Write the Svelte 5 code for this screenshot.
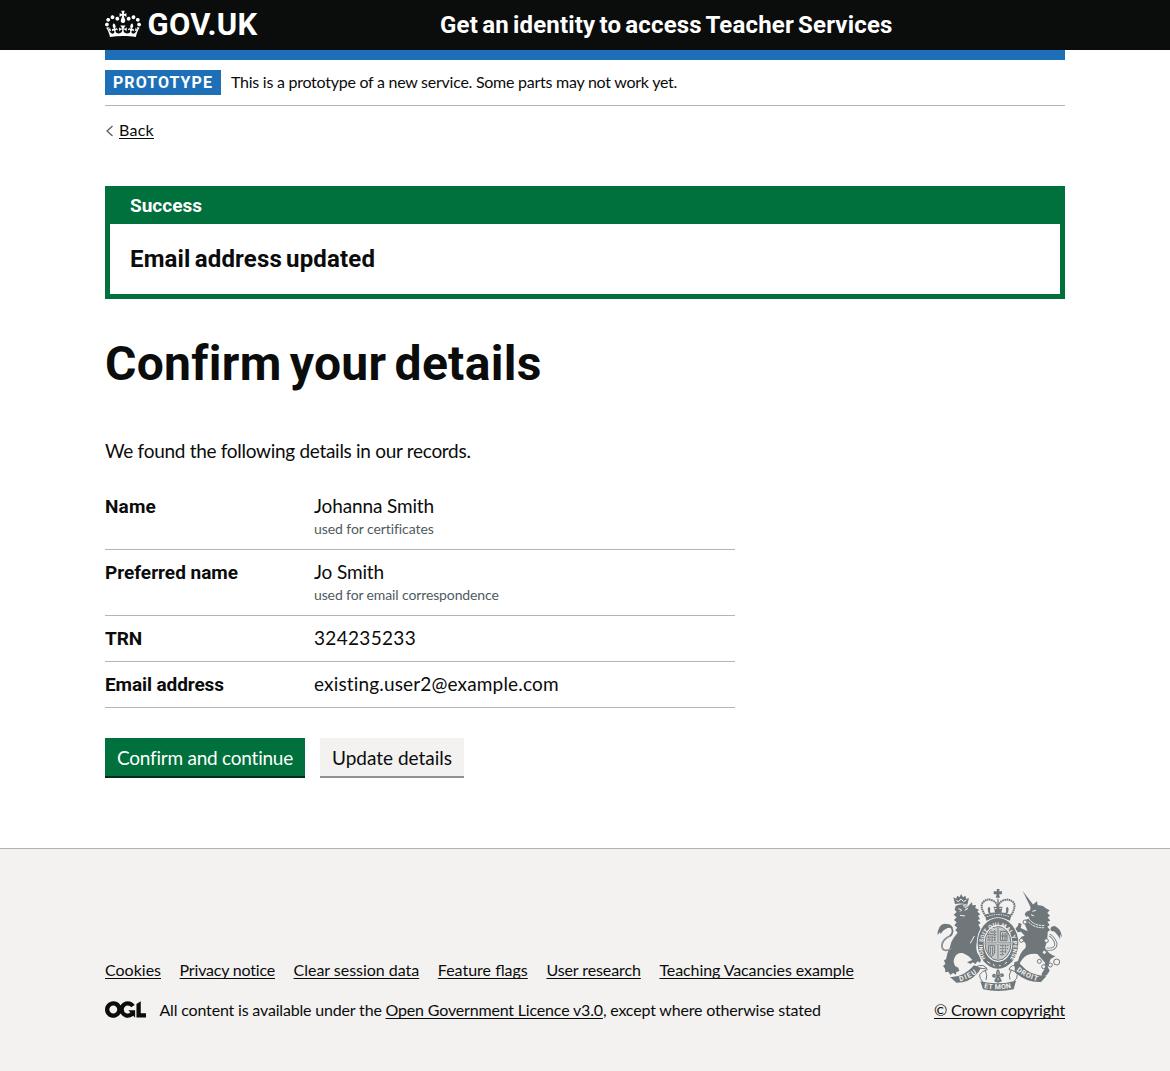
<script>
  const rows = [
    { key: 'Name', value: 'Johanna Smith', hint: 'used for certificates', k: 'k-name', v: 'v-name', h: 'h-name' },
    { key: 'Preferred name', value: 'Jo Smith', hint: 'used for email correspondence', k: 'k-pref', v: 'v-pref', h: 'h-pref' },
    { key: 'TRN', value: '324235233', k: 'k-trn', v: 'v-trn' },
    { key: 'Email address', value: 'existing.user2@example.com', k: 'k-email', v: 'v-email' }
  ];
  const links = ['Cookies', 'Privacy notice', 'Clear session data', 'Feature flags', 'User research', 'Teaching Vacancies example'];
</script>

<header class="header">
  <div class="container header-inner">
    <a class="logo" href="#top">
      <svg class="crown" viewBox="0 0 132 97" width="36" height="30" aria-hidden="true">
        <path fill="currentColor" fill-rule="evenodd" d="M25 30.2c3.5 1.5 7.7-.2 9.1-3.7 1.5-3.6-.2-7.8-3.9-9.2-3.6-1.4-7.6.3-9.1 3.9-1.4 3.5.3 7.5 3.9 9zM9 39.5c3.6 1.5 7.8-.2 9.2-3.7 1.5-3.6-.2-7.8-3.9-9.1-3.6-1.5-7.6.2-9.1 3.8-1.4 3.5.3 7.5 3.8 9zM4.4 57.2c3.5 1.5 7.7-.2 9.1-3.8 1.5-3.6-.2-7.7-3.9-9.1-3.5-1.5-7.6.3-9.1 3.8-1.4 3.5.3 7.6 3.9 9.1zm38.3-21.4c3.5 1.5 7.7-.2 9.1-3.8 1.5-3.6-.2-7.7-3.9-9.1-3.6-1.5-7.6.3-9.1 3.8-1.3 3.6.4 7.7 3.9 9.1zm64.4-5.6c-3.6 1.5-7.8-.2-9.1-3.7-1.5-3.6.2-7.8 3.8-9.2 3.6-1.4 7.7.3 9.2 3.9 1.3 3.5-.4 7.5-3.9 9zm15.9 9.3c-3.6 1.5-7.7-.2-9.1-3.7-1.5-3.6.2-7.8 3.7-9.1 3.6-1.5 7.7.2 9.2 3.8 1.5 3.5-.3 7.5-3.8 9zm4.7 17.7c-3.6 1.5-7.8-.2-9.2-3.8-1.5-3.6.2-7.7 3.9-9.1 3.6-1.5 7.7.3 9.2 3.8 1.3 3.5-.4 7.6-3.9 9.1zM89.3 35.8c-3.6 1.5-7.8-.2-9.2-3.8-1.4-3.6.2-7.7 3.9-9.1 3.6-1.5 7.7.3 9.2 3.8 1.4 3.6-.3 7.7-3.9 9.1zM69.7 17.7l8.9 4.7V9.3l-8.9 2.8c-.2-.3-.5-.6-.9-.9L72.4 0H59.6l3.5 11.2c-.3.3-.6.5-.9.9l-8.8-2.8v13.1l8.8-4.7c.3.3.6.7.9.9l-5 15.4v.1c-.2.8-.4 1.6-.4 2.4 0 4.1 3.1 7.5 7 8.1h.2c.3 0 .7.1 1 .1.4 0 .7 0 1-.1h.2c4-.6 7.1-4.1 7.1-8.1 0-.8-.1-1.7-.4-2.4V34l-5.1-15.4c.4-.2.7-.6 1-.9zM66 92.8c16.9 0 32.8 1.1 47.1 3.2 4-16.9 8.9-26.7 14-33.5l-9.6-3.4c1 4.9 1.1 7.2 0 10.2-1.5-1.4-3-4.3-4.2-8.7L108.6 76c2.8-2 5-3.2 7.5-3.3-4.4 9.4-10 11.9-13.6 11.2-4.3-.8-6.3-4.6-5.6-7.9 1-4.7 5.7-5.9 8-.5 4.3-8.7-3-11.4-7.6-8.8 7.1-7.2 7.9-13.5 2.1-21.1-8 6.1-8.1 12.3-4.5 20.8-4.7-5.4-12.1-2.5-9.5 6.2 3.4-5.2 7.9-2 7.2 3.1-.6 4.3-6.4 7.8-13.5 7.2-10.3-.9-10.9-8-11.2-13.8 2.5-.5 7.1 1.8 11 7.3L80.2 60c-4.1 4.4-8 5.3-12.3 5.4 1.4-4.4 8-11.6 8-11.6H55.5s6.4 7.2 7.9 11.6c-4.2-.1-8-1-12.3-5.4l1.4 16.4c3.9-5.5 8.5-7.7 10.9-7.3-.3 5.8-.9 12.8-11.1 13.8-7.2.6-12.9-2.9-13.5-7.2-.7-5 3.8-8.3 7.1-3.1 2.7-8.7-4.6-11.6-9.4-6.2 3.7-8.5 3.6-14.7-4.6-20.8-5.8 7.6-5 13.9 2.2 21.1-4.7-2.6-11.9.1-7.7 8.8 2.3-5.5 7.1-4.2 8.1.5.7 3.3-1.3 7.1-5.7 7.9-3.5.7-9-1.8-13.5-11.2 2.5.1 4.7 1.3 7.5 3.3l-4.7-15.4c-1.2 4.4-2.7 7.2-4.3 8.7-1.1-3-.9-5.3 0-10.2l-9.5 3.4c5 6.9 9.9 16.7 14 33.5 14.8-2.1 30.8-3.2 47.7-3.2z" />
      </svg>
      <span class="wordmark">GOV.UK</span>
    </a>
    <a class="service" href="#top">Get an identity to access Teacher Services</a>
  </div>
</header>

<div class="container">
  <div class="blue-bar"></div>
  <div class="phase">
    <strong class="tag">PROTOTYPE</strong>
    <span class="phase-text">This is a prototype of a new service. Some parts may not work yet.</span>
  </div>

  <a class="back" href="#back">
    <svg viewBox="0 0 8 12" width="8" height="12" aria-hidden="true"><path d="M7.5 1 2 6 7.5 11" fill="none" stroke="#505a5f" stroke-width="1.2" /></svg>
    <span>Back</span>
  </a>

  <main>
    <section class="notice">
      <h2>Success</h2>
      <p>Email address updated</p>
    </section>

    <h1>Confirm your details</h1>
    <p class="lead">We found the following details in our records.</p>

    <dl>
      {#each rows as row}
        <div class="row">
          <dt class={row.k}>{row.key}</dt>
          <dd>
            <span class="value {row.v}">{row.value}</span>
            {#if row.hint}<span class="hint {row.h}">{row.hint}</span>{/if}
          </dd>
        </div>
      {/each}
    </dl>

    <div class="buttons">
      <button class="primary">Confirm and continue</button>
      <button class="secondary">Update details</button>
    </div>
  </main>
</div>

<footer>
  <div class="container footer-inner">
    <div class="meta">
      <ul>
        {#each links as link, i}
          <li><a class="link-{i}" href="#link">{link}</a></li>
        {/each}
      </ul>
      <div class="licence">
        <svg viewBox="0 0 483.2 195.7" width="41" height="17" aria-hidden="true">
          <path fill="currentColor" d="M421.5 142.8V.1l-50.7 32.3v161.1h112.4v-50.7zm-122.3-9.6A47.12 47.12 0 0 1 221 97.8c0-26 21.1-47.1 47.1-47.1 16.7 0 31.4 8.7 39.7 21.8l42.7-27.2A97.63 97.63 0 0 0 268.1 0c-36.5 0-68.3 20.1-85.1 49.7A98 98 0 0 0 97.8 0C43.9 0 0 43.9 0 97.8s43.9 97.8 97.8 97.8c36.5 0 68.3-20.1 85.1-49.7a97.76 97.76 0 0 0 149.6 25.4l19.4 22.2h3v-87.8h-80l24.3 27.5zM97.8 145c-26 0-47.1-21.1-47.1-47.1s21.1-47.1 47.1-47.1 47.1 21.1 47.1 47.1S123.8 145 97.8 145" />
        </svg>
        <span>All content is available under the <a href="#ogl">Open Government Licence v3.0</a>, except where otherwise stated</span>
      </div>
    </div>

    <div class="copyright">
      <svg class="arms" viewBox="36 27 375 306" width="125" height="102" aria-hidden="true">
        <defs>
          <path id="garter" d="M182 235A46 60 0 1 1 256 235" />
          <path id="dieu" d="M105 304Q137 296 161 274" />
          <path id="motto" d="M177 324Q219 332 262 323" />
          <path id="droit" d="M274 272Q300 294 342 304" />
        </defs>

        <!-- imperial crown -->
        <g fill="none" stroke="#6f777b" stroke-width="4">
          <path d="M182 108Q163 80 174 67Q187 53 206 63Q217 70 218 84Q220 70 231 63Q250 53 265 67Q275 80 257 108" stroke-width="6" stroke-dasharray="5 1.5" />
          <path d="M219 56V100M206 82H232M192 82Q192 98 198 104M247 82Q247 98 241 104" />
        </g>
        <path fill="#6f777b" d="M215 27h9l-2 7h9v9h-9l3 10h-13l3-10h-9v-9h10zM180 104Q219 90 259 104L255 122Q219 108 184 122z" />
        <path d="M186 110Q219 97 253 110" fill="none" stroke="#f3f2f1" stroke-width="3" stroke-dasharray="4 3" />
        <path fill="#6f777b" d="m207 84 6 4 6-9 6 9 7-4-3 14h-19zM188 86l4-5 4 5-2 12h-4zM243 86l4-5 4 5-2 12h-4z" />

        <!-- lion -->
        <path fill="#6f777b" d="m90 72-5-20 8 4 4-9 7 5 4-10 6 10 7-5 3 10 8-3-5 20q-19-6-37-2z" />
        <path fill="#6f777b" d="M92 78Q111 68 130 78L141 66L142 76L153 75L151 84L162 89L157 95L166 103L159 107L165 117L158 121L167 129L160 134L168 148L160 162L163 176L158 184Q150 200 157 219Q163 226 168 240L165 248L158 244L151 252L143 247L137 252L126 247L142 240Q132 227 113 219Q94 217 88 235Q83 246 91 259L100 263L103 273L94 276L93 284L84 279L76 285L70 275L61 277L60 266L54 258L61 252L57 241L63 238Q66 218 74 204Q78 184 87 172L98 158L91 150L97 143L88 136L95 127L87 120L95 112L86 104L95 96L89 89z" />
        <path d="M80 206Q50 220 51 194Q54 177 75 168Q88 157 79 143Q73 136 59 145" fill="none" stroke="#6f777b" stroke-width="5" />
        <path d="M80 206Q50 220 51 194Q54 177 75 168" fill="none" stroke="#f3f2f1" stroke-width="1" />
        <path fill="#6f777b" d="M66 132Q51 129 44 140Q38 151 37 165L45 157L47 162Q54 151 65 145Q79 139 85 147Q80 132 66 132z" />
        <path d="m94 61 6 4 8-8 8 8 8-5M100 86l10 4-5 5M118 81l10 5-9 5M105 106l15 2M114 77l16 2M148 168l-12 22" fill="none" stroke="#f3f2f1" stroke-width="3" />

        <!-- unicorn -->
        <g fill="#6f777b">
          <path d="m293 33 34 44-9 7z" />
          <path d="M318 79 336 64 338 76Q354 75 361 84L374 91L367 98L375 108L368 112L376 122L367 125L374 135L367 140L375 150L368 156Q369 181 360 203Q368 220 391 229L377 237L368 260L374 272L365 286L351 290L350 281L358 268L360 248L337 222Q306 219 292 238L284 250Q291 257 292 265L278 264L267 258L268 247L279 243Q284 219 301 204Q305 193 298 185L284 183L289 170L299 167L288 155L278 157L271 146L279 137L281 128L290 132L287 144L308 154L299 132L302 119L314 115L309 109L303 110L299 102L304 95L315 91z" />
          <path d="M399 145Q386 132 377 143Q374 154 386 154Q397 161 405 178L406 163L411 174Q409 153 399 145z" />
        </g>
        <path d="M365 207Q392 211 393 191Q386 171 373 165" fill="none" stroke="#6f777b" stroke-width="9" />
        <path d="M365 207Q392 211 393 191Q386 171 373 165" fill="none" stroke="#f3f2f1" stroke-width="4" />
        <path d="M312 117Q329 139 360 136M310 125Q328 145 358 143" fill="none" stroke="#f3f2f1" stroke-width="3" stroke-dasharray="7 2" />
        <path d="M322 94l11-3M318 104l9 4" fill="none" stroke="#f3f2f1" stroke-width="3" />
        <g fill="#f3f2f1" stroke="#6f777b" stroke-width="3">
          <circle cx="300" cy="126" r="6" /><circle cx="289" cy="181" r="6" /><circle cx="364" cy="182" r="6" />
          <circle cx="358" cy="217" r="6" /><circle cx="343" cy="244" r="6" /><circle cx="356" cy="260" r="6" />
          <circle cx="376" cy="255" r="6" /><circle cx="395" cy="246" r="9" />
        </g>

        <!-- garter and shield -->
        <ellipse cx="219" cy="190" rx="64" ry="78" fill="#f3f2f1" />
        <ellipse cx="219" cy="190" rx="61" ry="76" fill="#6f777b" />
        <ellipse cx="219" cy="190" rx="43" ry="56" fill="#f3f2f1" />
        <ellipse cx="219" cy="190" rx="39" ry="51" fill="#c9cbcb" stroke="#6f777b" stroke-width="3" />
        <g stroke="#6f777b" fill="none">
          <path d="M219 142V237M181 190H257" stroke-width="5" />
          <path d="M195 156H214M188 164H214M187 172H214M186 180H214M192 160v24M201 154v32M209 150v34" stroke-width="3" stroke-dasharray="5 2" />
          <path d="M226 154H246V182H226zM233 158v22M240 158v22M227 168h19" stroke-width="3" />
          <path d="M190 197H209V219L200 230L190 216zM196 200v21M203 200v24" stroke-width="3" />
          <path d="M225 197H252M225 206H249M225 215H245M225 224H238M232 196v30M241 195v25" stroke-width="3" stroke-dasharray="5 2" />
        </g>
        <path d="M219 142V237M181 190H257" stroke="#f3f2f1" stroke-width="2" />
        <text class="garter-text"><textPath href="#garter" textLength="244">HONI SOIT QUI MAL Y PENSE</textPath></text>
        <path d="M187 245l9 6M204 252l5 7M222 257h5M239 252l7-6" stroke="#f3f2f1" stroke-width="3" />

        <!-- motto scroll -->
        <g fill="#6f777b">
          <path d="M75 291Q114 294 147 256L168 264Q162 276 153 284Q133 307 94 308z" />
          <path d="M289 256Q315 287 364 289L348 306Q302 308 269 275L269 259z" />
          <path d="M166 304Q219 317 273 302L266 328Q219 338 174 328z" />
        </g>
        <path d="M151 261Q178 248 187 269Q170 273 164 284Q163 296 173 305M164 264Q174 268 184 264M288 259Q256 250 252 269Q271 272 277 283Q278 296 267 304M180 269Q189 287 183 300M259 269Q249 287 255 299" fill="none" stroke="#6f777b" stroke-width="3" />
        <path fill="#6f777b" d="M219 267Q228 276 223 286Q228 276 236 283Q239 292 229 291L225 292L231 304L219 308L207 304L213 292Q199 295 202 284Q209 277 215 286Q210 276 219 267z" />
        <path d="M219 275v9M209 286l6 4M229 286l-6 4M219 294v8" stroke="#f3f2f1" stroke-width="2" />
        <g class="scroll-text">
          <text><textPath href="#dieu" textLength="57">DIEU</textPath></text>
          <text><textPath href="#motto" textLength="82">ET MON</textPath></text>
          <text><textPath href="#droit" textLength="70">DROIT</textPath></text>
        </g>
      </svg>
      <a href="#crown">© Crown copyright</a>
    </div>
  </div>
</footer>

<style>
  :global(body) {
    margin: 0;
    background: #fff;
    color: #0b0c0c;
    font-family: Lato, "Liberation Sans", sans-serif;
    font-size: 19px;
    line-height: 25px;
  }
  a { color: inherit; text-decoration: none; }
  .container { width: 960px; margin: 0 auto; }

  .header { height: 50px; background: #0b0c0c; color: #fff; font-family: Roboto, sans-serif; font-weight: 700; }
  .header-inner { display: flex; height: 50px; align-items: center; }
  .logo { display: flex; align-items: center; width: 335px; }
  .crown { display: block; margin-right: 6.5px; margin-top: -2px; }
  .wordmark { font-size: 31px; line-height: 30px; letter-spacing: 0.3px; }
  .service { font-size: 24px; line-height: 30px; letter-spacing: 0.18px; word-spacing: -2px; }

  .blue-bar { height: 10px; background: #1d70b8; }
  .phase { display: flex; align-items: center; padding: 10px 0; border-bottom: 1px solid #b1b4b6; }
  .tag { padding: 0 8px; background: #1d70b8; color: #fff; font: 700 16px/25px Roboto, sans-serif; letter-spacing: 1.05px; }
  .phase-text { margin-left: 10px; padding-bottom: 2px; font-size: 16px; line-height: 23px; letter-spacing: -0.255px; }

  .back { display: flex; align-items: center; gap: 6px; width: max-content; margin-top: 15px; font-size: 16px; line-height: 20px; }
  .back span { line-height: 18px; padding-bottom: 2px; letter-spacing: 0.266px; text-decoration: underline; text-underline-offset: 2px; text-decoration-thickness: 1px; text-decoration-skip-ink: none; }

  .notice { margin-top: 45px; border: 5px solid #00703c; background: #00703c; font-family: Roboto, sans-serif; font-weight: 700; }
  .notice h2 { margin: 0; padding: 2px 20px 6px; color: #fff; font-size: 19px; line-height: 25px; }
  .notice p { margin: 0; padding: 20px; background: #fff; font-size: 24px; line-height: 30px; letter-spacing: 0.16px; word-spacing: -2px; }

  h1 { margin: 40px 0 49px; font: 700 48px/50px Roboto, sans-serif; letter-spacing: 0.3px; word-spacing: -4px; }
  .lead { margin: 0; letter-spacing: -0.293px; }

  dl { width: 630px; margin: 21px 0 30px; }
  .row { display: grid; grid-template-columns: 209px 1fr; padding: 10px 0; border-bottom: 1px solid #b1b4b6; }
  dt { font-family: Roboto, sans-serif; font-weight: 700; }
  dd { margin: 0; }
  .value, .hint { display: block; }
  .value { line-height: 23px; padding-bottom: 2px; }
  .hint { color: #505a5f; font-size: 14px; line-height: 20px; }
  .k-name { letter-spacing: 0.177px; }
  .k-trn, .k-email { letter-spacing: -0.1px; }
  .v-name, .v-pref { letter-spacing: -0.13px; }
  .v-trn { letter-spacing: 0.313px; }
  .v-email { letter-spacing: 0.158px; }
  .h-name { letter-spacing: -0.079px; }
  .h-pref { letter-spacing: -0.122px; }

  .buttons { display: flex; gap: 15px; }
  button { height: 38px; padding: 2px 0 0; border: 0; border-radius: 0; font: 400 19px/36px Lato, sans-serif; }
  .primary { width: 200px; background: #00703c; color: #fff; box-shadow: 0 2px 0 #002d18; letter-spacing: -0.232px; }
  .secondary { width: 144px; background: #f3f2f1; color: #0b0c0c; box-shadow: 0 2px 0 #929191; }

  footer { height: 222px; margin-top: 72px; border-top: 1px solid #b1b4b6; background: #f3f2f1; font-size: 16px; line-height: 20px; }
  .footer-inner { display: flex; justify-content: space-between; align-items: flex-end; padding-top: 40px; }
  footer a { text-decoration: underline; text-decoration-thickness: 1px; text-underline-offset: 2px; text-decoration-skip-ink: none; }
  .meta { padding-bottom: 1px; }
  ul { display: flex; gap: 18.6px; margin: 0 0 20px; padding: 0; list-style: none; white-space: nowrap; }
  .link-1 { letter-spacing: -0.199px; }
  .link-2 { letter-spacing: -0.025px; }
  .link-4, .link-5 { letter-spacing: -0.095px; }
  .licence { display: flex; align-items: center; gap: 13.5px; letter-spacing: -0.175px; white-space: nowrap; }
  .licence svg { display: block; margin-top: -2px; }
  .copyright { display: flex; flex-direction: column; align-items: center; gap: 9px; padding-bottom: 1px; letter-spacing: -0.188px; }
  .arms { display: block; margin-left: -1px; }
  .garter-text { fill: #f3f2f1; font: 700 17px Roboto, sans-serif; letter-spacing: 0; }
  .scroll-text { fill: #f3f2f1; font: 700 21px Roboto, sans-serif; letter-spacing: 0; }
</style>
